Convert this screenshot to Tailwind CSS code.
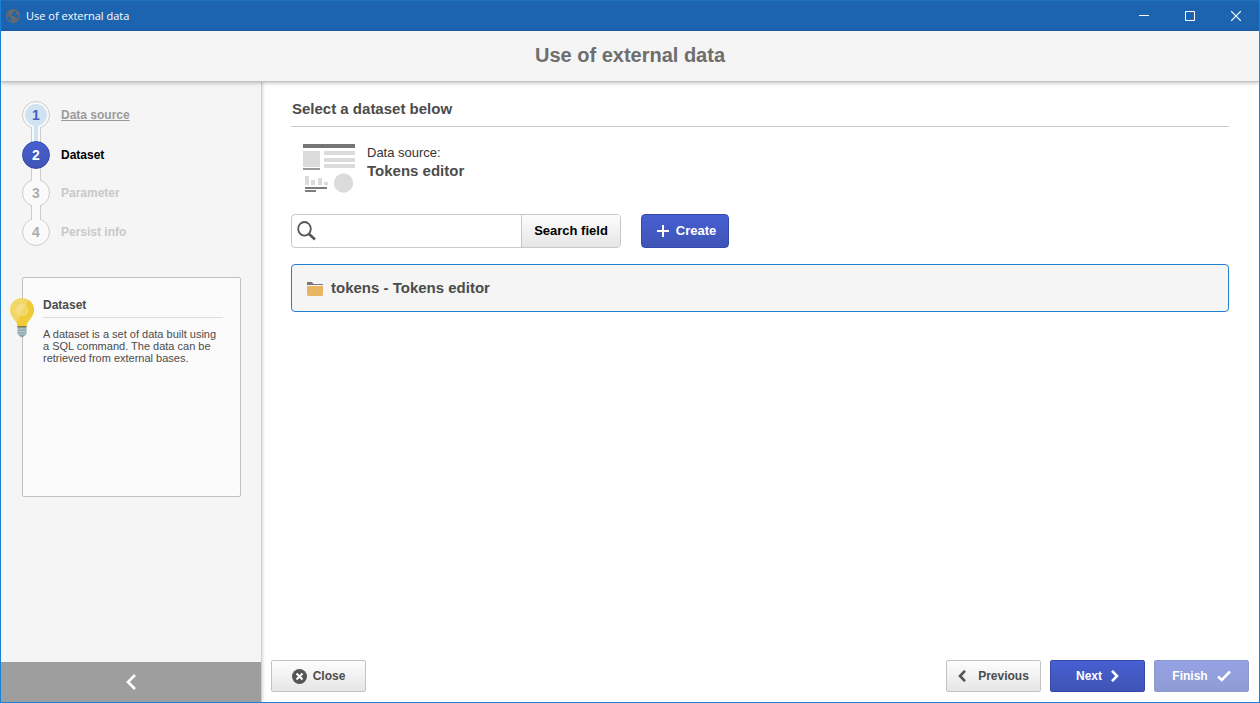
<!DOCTYPE html>
<html lang="en">
<head>
<meta charset="utf-8">
<meta name="viewport" content="width=device-width, initial-scale=1">
<title>Use of external data</title>
<script src="https://cdn.jsdelivr.net/npm/@tailwindcss/browser@4"></script>
</head>
<body class="flex min-h-screen flex-col border border-t-0 border-[#1a82d4] bg-white font-['Liberation_Sans',Arial,sans-serif] text-[#4c4c4c]">

<!-- Window title bar -->
<div class="flex h-[31px] shrink-0 items-center justify-between border-t border-[#1f72b8] bg-[#1c63b0] pl-[5px] text-white">
  <div class="flex items-center gap-[6px]">
    <svg class="size-[14px]" viewBox="0 0 14 14" aria-hidden="true">
      <circle cx="7" cy="7" r="7" fill="#666a6e"/>
      <path d="M1.500 6 3.500 8 4.500 9 5 11 6.500 12.500C3.500 12.500 1.300 9.500 1.500 6Z" fill="#1c63b0"/>
      <path d="M8.500 1.500 8.500 3 7 3.500 6.500 5 5 5.500 5.500 6.500 8 7 9.500 8.500 11 9 11.500 10 12.300 8.500 12.500 6 11.500 5.500 10 6 9 5 10.500 3.500 11 3Z" fill="#1c63b0"/>
    </svg>
    <span class="font-['Open_Sans','Noto_Sans',sans-serif] text-[11px]">Use of external data</span>
  </div>
  <div class="flex self-stretch">
    <button type="button" aria-label="Minimize" class="flex w-[46px] items-center justify-center">
      <svg class="size-[10px]" viewBox="0 0 10 10" stroke="#fff"><path d="M0 4.500H10"/></svg>
    </button>
    <button type="button" aria-label="Maximize" class="flex w-[46px] items-center justify-center">
      <svg class="size-[10px]" viewBox="0 0 10 10" stroke="#fff" fill="none"><path d="M.5.5h9v9h-9z"/></svg>
    </button>
    <button type="button" aria-label="Close window" class="flex w-[46px] items-center justify-center">
      <svg class="size-[10px]" viewBox="0 0 10 10" stroke="#fff" stroke-width="1.200"><path d="M0 0 10 10M10 0 0 10"/></svg>
    </button>
  </div>
</div>

<header class="z-10 flex h-[51px] shrink-0 items-center justify-center border-b border-[#c2c2c2] bg-[#f5f5f5] pb-[2px] shadow-[0_1px_4px_rgba(0,0,0,0.25)]">
  <h1 class="text-[20px] font-bold text-[#6e6e6e]">Use of external data</h1>
</header>

<div class="flex grow">
  <aside class="flex w-[261px] shrink-0 flex-col border-r border-[#cfcfcf] bg-[#f5f5f5] shadow-[1px_0_3px_rgba(0,0,0,0.15)]">
    <ol class="flex flex-col pt-[19px] pl-[21px] text-[12px] font-bold text-[#c9c9c9]">
      <li class="flex h-7 items-center gap-[11px]">
        <span class="flex size-7 items-center justify-center rounded-full border border-[#cccccc] bg-[#fafafa]">
          <span class="flex size-[22px] items-center justify-center rounded-full bg-[#d1e3f1] text-[14px] text-[#465ac8]">1</span>
        </span>
        <a href="#" class="text-[#9b9b9b] underline">Data source</a>
      </li>
      <li aria-hidden="true" class="relative z-10 -my-[2px] ml-[9px] flex h-4 w-[10px] justify-center border-x border-[#cccccc] bg-[#fafafa]"><span class="-mt-[3px] h-[19px] w-1 bg-[#d1e3f1]"></span></li>
      <li class="relative z-20 flex h-7 items-center gap-[11px] text-black">
        <span class="flex size-7 items-center justify-center rounded-full border border-[#3548ac] bg-linear-to-b from-[#4760d3] to-[#3f54b4] text-[14px] text-white">2</span>
        <span>Dataset</span>
      </li>
      <li aria-hidden="true" class="relative z-10 -my-[2px] ml-[9px] h-[14px] w-[10px] border-x border-[#cccccc] bg-[#fafafa]"></li>
      <li class="flex h-7 items-center gap-[11px]">
        <span class="flex size-7 items-center justify-center rounded-full border border-[#cccccc] bg-[#fafafa] text-[14px] text-[#acacac]">3</span>
        <span>Parameter</span>
      </li>
      <li aria-hidden="true" class="relative z-10 -my-[2px] ml-[9px] h-[15px] w-[10px] border-x border-[#cccccc] bg-[#fafafa]"></li>
      <li class="flex h-7 items-center gap-[11px]">
        <span class="flex size-7 items-center justify-center rounded-full border border-[#cccccc] bg-[#fafafa] text-[14px] text-[#acacac]">4</span>
        <span>Persist info</span>
      </li>
    </ol>

    <section class="relative mt-[31px] mr-5 ml-[21px] h-[220px] rounded-[2px] border border-[#c0c0c0] bg-[#fbfbfb] pt-[19px] pr-[17px] pl-5">
      <svg class="absolute top-5 -left-[13px] h-10 w-6" viewBox="0 0 24 40" aria-hidden="true">
        <path d="M12 0C5.300 0 0 5.300 0 12c0 5 3 7.500 5.300 11 1.500 2.300 2 3.500 2.300 5.500h8.800c.3-2 .8-3.200 2.300-5.500C21 19.500 24 17 24 12 24 5.300 18.700 0 12 0Z" fill="#f1d768"/>
        <path d="M18.500 2C22 4.200 24 7.800 24 12c0 5-3 7.500-5.300 11-1.500 2.300-2 3.500-2.300 5.500H7.800C7.600 27 7.300 25.800 6.700 24.700Z" fill="#efcb3a"/>
        <circle cx="12" cy="12" r="6" fill="#f5e089"/>
        <path d="M15.200 7A6 6 0 0 1 8.800 17Z" fill="#f1d866"/>
        <path d="M7.500 28h9v8L14 38.500 12 39.500 10 38.500 7.500 36Z" fill="#8fa7ae"/>
        <path d="M7.500 28h9v1.300h-9z" fill="#86784b"/>
        <path d="M7.500 31h9M7.500 33.500h9M8 36h8" stroke="#b8c8cd"/>
      </svg>
      <h2 class="border-b border-[#dddddd] pb-1 text-[12px] leading-4 font-bold">Dataset</h2>
      <p class="mt-[10px] text-[11px] leading-3">A dataset is a set of data built using a SQL command. The data can be retrieved from external bases.</p>
    </section>

    <button type="button" aria-label="Collapse sidebar" class="mt-auto flex h-10 items-center justify-center bg-[#9e9e9e]">
      <svg class="h-4 w-[10px]" viewBox="0 0 10 16" fill="none" stroke="#fff" stroke-width="2.600"><path d="M9 1 2 8l7 7"/></svg>
    </button>
  </aside>

  <main class="flex min-w-0 grow flex-col">
    <div class="pt-[17px] pr-[30px] pl-[29px]">
      <h2 class="border-b border-[#c8c8c8] pb-[7px] pl-px text-[15px] leading-5 font-bold">Select a dataset below</h2>

      <div class="mt-[17px] flex gap-3 pl-3">
        <svg class="h-[50px] w-[52px]" viewBox="0 0 52 50" aria-hidden="true">
          <path d="M0 0h52v4H0z" fill="#757575"/>
          <path d="M0 7h17v16H0zM21 7h31v4H21zM21 14h31v4H21zM21 20h31v4H21zM2 32h4v9H2zM8 36h4v5H8zM15 34h4v7h-4zM21 38h4v3h-4z" fill="#dbdbdb"/>
          <path d="M0 24h17v2H0z" fill="#999"/>
          <circle cx="40.500" cy="39" r="9.700" fill="#dbdbdb"/>
          <path d="M2 43h22v2H2zM2 46h11v2H2z" fill="#7d7d7d"/>
        </svg>
        <div class="leading-[18px]">
          <p class="text-[13px] text-[#333]">Data source:</p>
          <p class="text-[15px] font-bold">Tokens editor</p>
        </div>
      </div>

      <form class="mt-5 flex gap-5" onsubmit="return false">
        <div class="flex h-[34px] w-[330px] rounded-[4px] border border-[#c8c8c8]">
          <label for="search" class="flex w-[30px] shrink-0 items-center pl-[5px]">
            <svg class="size-5" viewBox="0 0 20 20" fill="none" stroke="#555" role="img" aria-label="Search"><ellipse cx="7.500" cy="7.800" rx="6.300" ry="6.800" stroke-width="1.800"/><path d="m12 13 6 5.500" stroke-width="2.600"/></svg>
          </label>
          <input id="search" type="text" class="min-w-0 grow bg-transparent text-[13px] outline-none">
          <button type="button" class="w-[99px] shrink-0 rounded-r-[3px] border-l border-[#c8c8c8] bg-linear-to-b from-[#fdfdfd] to-[#e6e6e6] text-[13px] font-bold text-black">Search field</button>
        </div>
        <button type="button" class="flex h-[34px] w-[88px] items-center justify-center gap-[7px] rounded-[4px] border border-[#3548ac] bg-linear-to-b from-[#4760d3] to-[#3f54b4] pl-[3px] text-[13px] font-bold text-white">
          <svg class="size-3" viewBox="0 0 12 12" stroke="#fff" stroke-width="2"><path d="M6 0v12M0 6h12"/></svg>Create
        </button>
      </form>

      <button type="button" class="mt-4 flex h-12 w-full items-center gap-2 rounded-[4px] border border-[#1f7fd0] bg-[#f5f5f5] pl-[15px] text-[15px] font-bold">
        <svg class="mt-[2px] h-[14px] w-4" viewBox="0 0 16 14" aria-hidden="true"><path d="M0 0h5l1.500 2H16v1H0z" fill="#777"/><path d="M0 4h16v9l-1 1H1l-1-1z" fill="#e8b565"/></svg>
        tokens - Tokens editor
      </button>
    </div>

    <footer class="mt-auto flex gap-[9px] pr-[10px] pb-[10px] pl-[9px] text-[12px] font-bold">
      <button type="button" class="mr-auto flex h-8 w-[95px] items-center justify-center gap-[6px] rounded-[2px] border border-[#c2c2c2] bg-linear-to-b from-[#fdfdfd] to-[#e6e6e6]">
        <svg class="mt-[1px] size-[15px]" viewBox="0 0 15 15" aria-hidden="true"><circle cx="7.500" cy="7.500" r="7.500" fill="#555"/><path d="m4.500 4.500 6 6m0-6-6 6" stroke="#fff" stroke-width="2"/></svg>Close
      </button>
      <button type="button" class="flex h-8 w-[95px] items-center justify-center gap-3 rounded-[2px] border border-[#c2c2c2] bg-linear-to-b from-[#fdfdfd] to-[#e6e6e6]">
        <svg class="h-3 w-2" viewBox="0 0 8 12" fill="none" stroke="#555" stroke-width="2.600"><path d="M7 .8 2 6l5 5.200"/></svg>Previous
      </button>
      <button type="button" class="flex h-8 w-[95px] items-center justify-center gap-[9px] rounded-[2px] border border-[#3548ac] bg-linear-to-b from-[#4760d3] to-[#3f54b4] text-white">
        Next<svg class="h-3 w-2" viewBox="0 0 8 12" fill="none" stroke="#fff" stroke-width="2.600"><path d="m1 .8 5 5.200-5 5.200"/></svg>
      </button>
      <button type="button" disabled class="flex h-8 w-[95px] items-center justify-center gap-[9px] rounded-[2px] border border-[#8e99cf] bg-linear-to-b from-[#94a2e4] to-[#8f9cd4] text-white">
        Finish<svg class="h-3 w-[14px]" viewBox="0 0 14 12" fill="none" stroke="#fff" stroke-width="2.600"><path d="M1 6.500 4.800 10 13 1.500"/></svg>
      </button>
    </footer>
  </main>
</div>
</body>
</html>
